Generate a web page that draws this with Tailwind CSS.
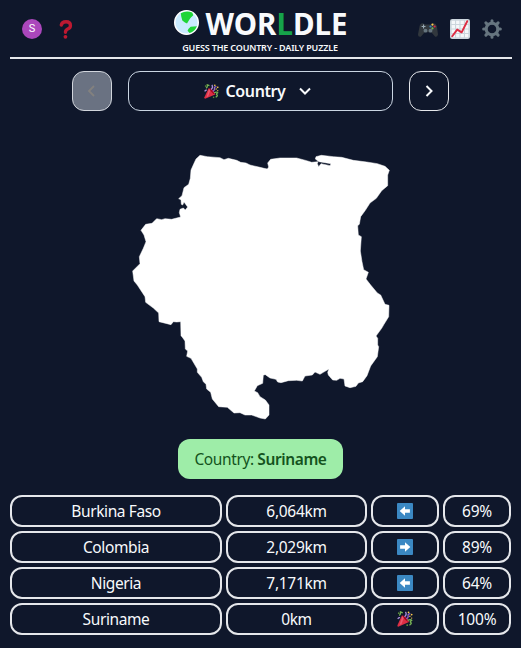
<!DOCTYPE html>
<html lang="en">
<head>
<meta charset="utf-8">
<title>Worldle</title>
<script src="https://cdn.jsdelivr.net/npm/@tailwindcss/browser@4"></script>
</head>
<body class="h-[648px] overflow-hidden bg-slate-900 px-[10px] font-['Noto_Sans','Open_Sans',sans-serif] text-slate-50">
<svg class="hidden">
  <symbol id="party" viewBox="0 0 36 36">
    <path fill="#dd2e44" d="M11 10 1 32q-1 4 3 3l23-10q0-5-6-10T11 10z"/>
    <path fill="#ea596e" d="M12 12 6 31l4-1 6-17z"/>
    <path fill="#a0041e" d="M12 10q8 1 14 15l-5-3q-5-4-9-12z"/>
    <path fill="none" stroke="#aa8dd8" stroke-width="3" d="M17 13q6-5 2-11M2 18q1-4 5-3"/>
    <path fill="none" stroke="#77b255" stroke-width="3" d="M5 10q4-3 3-8l5 2M24 21q7-3 9 0-5 3-2 5t-3 6"/>
    <path fill="none" stroke="#9266cc" stroke-width="3" d="M21 17q5-1 4-6t5-5"/>
    <g fill="#ffcc4d"><circle cx="26" cy="3" r="2"/><circle cx="33" cy="8" r="2"/><circle cx="29" cy="12" r="1.7"/><circle cx="33" cy="16" r="1.5"/></g>
    <g fill="#5c913b"><circle cx="23" cy="32" r="2"/><circle cx="4" cy="5" r="2"/></g>
  </symbol>
  <symbol id="arrow" viewBox="0 0 36 36">
    <rect width="36" height="36" rx="2" fill="#3b88c3"/>
    <path fill="#fff" d="M6 18 18 7.5V14h11v8H18v6.500z"/>
  </symbol>
</svg>

<header class="flex h-[59px] w-[502px] items-center justify-between border-b-2 border-gray-200">
  <div class="flex w-[120px] items-center pl-3">
    <span class="flex size-5 items-center justify-center rounded-full bg-[#ab47bc] pt-px font-[Roboto] text-[11px] leading-none text-white"><span class="h-3">S</span></span>
    <svg class="ml-[14px] size-5" viewBox="0 0 36 36"><path fill="none" stroke="#be1931" stroke-width="6" stroke-linecap="round" d="M9.500 11q1-6 8.500-6 8 0 8 7 0 4-5 6-4 2-4 6"/><circle cx="17" cy="32" r="3.400" fill="#be1931"/></svg>
  </div>
  <div class="flex flex-col items-center pt-1">
    <h1 class="flex h-[36px] items-center pt-1">
      <svg class="mr-[6px] mb-1 size-[25px]" viewBox="0 0 24 24"><circle cx="12" cy="12" r="11.300" fill="#c9ebff" stroke="#fff" stroke-width="1.400"/><path fill="#1fd537" d="M6.500 3Q12 0 17.500 2.500L18.500 5 16 7.500 14.500 9.500 12.500 13 10.500 12 8 10 7 6.500zM14 18l2-2 6-.5q-2 5-7 6.500l-2-2z"/></svg>
      <span class="text-[29.500px] leading-[30px] font-bold">WOR<span class="text-[#16a34a]">L</span>DLE</span>
    </h1>
    <p class="mr-[2px] h-[17px] text-[9px] leading-[15px] font-semibold tracking-[-0.17px]">GUESS THE COUNTRY - DAILY PUZZLE</p>
  </div>
  <div class="flex w-[120px] items-center justify-end gap-3 pr-[10px]">
    <svg class="size-5" viewBox="0 0 36 36"><path fill="#31373d" d="M3 12q2-5 7-4l2 2h12l2-2q6-1 8 5l2 15q-1 5-5 4l-7-8h-12l-7 8q-5 1-5-4z"/><path stroke="#99aab5" stroke-width="2" d="M10 10v7M6.500 13.500h7"/><g><circle cx="26" cy="10" r="2" fill="#ffcc4d"/><circle cx="22.500" cy="13.500" r="2" fill="#3b88c3"/><circle cx="30" cy="13.500" r="2" fill="#dd2e44"/><circle cx="26" cy="17" r="2" fill="#77b255"/><circle cx="13.500" cy="21" r="3.500" fill="#66757f"/><circle cx="22.500" cy="21" r="3.500" fill="#66757f"/></g></svg>
    <svg class="size-5" viewBox="0 0 36 36"><rect width="36" height="36" rx="4" fill="#ccd6dd"/><path fill="#f5f8fa" d="M3 3h6v6H3zM11 3h6v6h-6zM19 3h6v6h-6zM27 3h6v6h-6zM3 11h6v6H3zM11 11h6v6h-6zM19 11h6v6h-6zM27 11h6v6h-6zM3 19h6v6H3zM11 19h6v6h-6zM19 19h6v6h-6zM27 19h6v6h-6zM3 27h6v6H3zM11 27h6v6h-6zM19 27h6v6h-6zM27 27h6v6h-6z"/><path fill="none" stroke="#dd2e44" stroke-width="3.500" stroke-linecap="round" stroke-linejoin="round" d="m4 31 9-12 8 5L31 4"/></svg>
    <svg class="size-5" viewBox="0 0 36 36"><g stroke="#66757f" fill="none"><circle cx="18" cy="18" r="10.500" stroke-width="5.500"/><path stroke-width="5.500" stroke-linecap="round" d="M18 3v4M18 29v4M3 18h4M29 18h4M7 7l3 3M26 26l3 3M29 7l-3 3M10 26l-3 3"/></g></svg>
  </div>
</header>

<nav class="mt-3 flex justify-center gap-4">
  <button class="flex size-10 items-center justify-center rounded-xl border border-gray-300 bg-gray-500"><svg class="size-4" viewBox="0 0 16 16" fill="none" stroke="#83817f" stroke-width="1.800"><path d="m10 3-5 5 5 5"/></svg></button>
  <button class="flex h-10 w-[265px] items-center justify-center rounded-xl border border-slate-300 pr-[4px] text-[16px] font-semibold"><svg class="mr-[7px] size-[15px]"><use href="#party"/></svg><span class="h-6 leading-6 tracking-[-0.4px]">Country</span><svg class="ml-[12px] size-4" viewBox="0 0 16 16" fill="none" stroke="currentColor" stroke-width="2"><path d="m3 5.500 5 5 5-5"/></svg></button>
  <button class="flex size-10 items-center justify-center rounded-xl border border-gray-200"><svg class="size-4" viewBox="0 0 16 16" fill="none" stroke="currentColor" stroke-width="2"><path d="m5.500 3 5 5-5 5"/></svg></button>
</nav>

<main>
  <svg class="mt-[34px] ml-[110px] h-[280px] w-[280px]" viewBox="0 0 840 840"><path fill="#fff" stroke="#fff" stroke-width="1.500" stroke-linejoin="round" d="M228 42 240 31 262 35 300 38 312 44 325 40 350 46 362 52 378 54 390 60 420 67 432 70 442 72 446 66 443 54 452 43 480 39 530 39 560 47 575 52 594 50 592 56 596 65 603 56 630 62 633 56 597 50 586 42 588 35 604 31 640 35 665 37 700 46 740 51 772 56 795 64 808 76 803 90 803 122 785 137 769 160 750 174 736 196 722 215 718 238 713 242 715 270 724 275 721 318 726 350 731 374 745 382 738 402 752 420 772 444 782 450 795 478 807 481 806 515 792 538 785 550 768 573 773 580 773 600 776 605 772 635 752 663 741 692 728 710 715 714 708 724 690 728 675 723 672 702 660 700 650 706 638 705 625 690 623 682 627 672 610 682 600 688 585 681 577 690 555 693 547 708 530 706 505 707 483 713 473 711 468 703 450 699 436 689 430 690 428 715 412 722 403 738 413 743 420 755 436 765 447 780 447 810 436 822 420 819 395 810 375 810 360 803 342 804 322 787 296 785 277 762 272 742 260 732 258 718 250 710 245 697 232 682 232 672 213 640 200 634 203 618 196 612 195 588 188 578 183 572 182 530 170 531 160 530 153 539 117 530 116 504 100 489 77 472 75 455 52 420 42 408 38 378 60 356 58 335 70 310 78 290 72 270 63 256 77 238 96 235 110 221 125 224 135 221 155 223 182 216 178 203 180 193 190 189 196 195 203 186 192 171 188 180 184 178 183 164 176 161 186 152 192 128 206 118 211 100 213 75 222 55Z"/></svg>

  <div class="mt-[14px] ml-[168px] flex h-10 w-[165px] items-center justify-center rounded-xl bg-[#9eeda8] pt-[2px] text-[15.500px] tracking-[-0.4px] whitespace-pre text-[#14531d]"><span>Country: </span><b class="font-semibold">Suriname</b></div>

  <div class="mt-4 grid grid-cols-[212px_141px_68px_68px] gap-1 text-[15.500px] leading-7 tracking-[-0.4px] *:flex *:h-8 *:items-center *:justify-center *:rounded-xl *:border-2 *:border-gray-200">
    <div>Burkina Faso</div><div class="tracking-[-0.3px]">6,064km</div><div><svg class="size-4"><use href="#arrow"/></svg></div><div class="tracking-[-0.2px]">69%</div>
    <div>Colombia</div><div class="tracking-[-0.3px]">2,029km</div><div><svg class="size-4 rotate-180"><use href="#arrow"/></svg></div><div class="tracking-[-0.2px]">89%</div>
    <div>Nigeria</div><div class="tracking-[-0.3px]">7,171km</div><div><svg class="size-4"><use href="#arrow"/></svg></div><div class="tracking-[-0.2px]">64%</div>
    <div>Suriname</div><div>0km</div><div><svg class="size-4"><use href="#party"/></svg></div><div class="tracking-[-0.2px]">100%</div>
  </div>
</main>
</body>
</html>
